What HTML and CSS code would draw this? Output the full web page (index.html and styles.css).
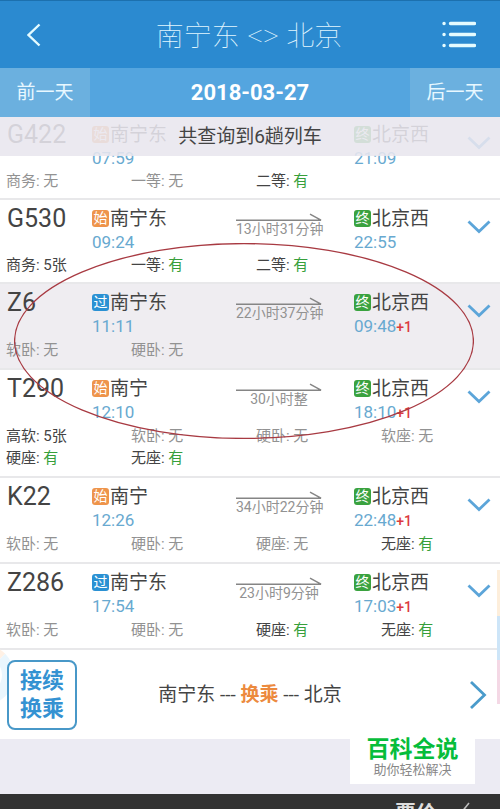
FILE: index.html
```html
<!DOCTYPE html>
<html lang="zh-CN">
<head>
<meta charset="utf-8">
<meta name="viewport" content="width=device-width, initial-scale=1">
<title>南宁东 - 北京</title>
<link rel="stylesheet" href="styles.css">
</head>
<body>
<svg class="defs" aria-hidden="true">
  <symbol id="arrow" viewBox="0 0 86 10"><path d="M0 8.2H85L74 2.2" fill="none" stroke="#858585" stroke-width="1.5"/></symbol>
  <symbol id="down" viewBox="0 0 24 14"><path d="M1.5 1.5L12 11.5L22.5 1.5" fill="none" stroke="#5ca5d9" stroke-width="2.8"/></symbol>
</svg>
<header class="topbar">
  <button class="icon-btn" aria-label="返回"><svg width="14" height="24" viewBox="0 0 14 24"><path d="M12.500 1.500L1.500 12L12.500 22.500" fill="none" stroke="#e4fbff" stroke-width="2.4"/></svg></button>
  <h1>南宁东 &lt;&gt; 北京</h1>
  <button class="icon-btn" aria-label="菜单"><svg width="34" height="27" viewBox="0 0 34 27"><path d="M8.500 2.500H32.500M8.500 13.500H32.500M8.500 24.500H32.500M2 2.500H2.100M2 13.500H2.100M2 24.500H2.100" stroke="#e4fbff" stroke-width="3.400" stroke-linecap="round"/></svg></button>
</header>
<nav class="days">
  <button>前一天</button>
  <strong>2018-03-27</strong>
  <button>后一天</button>
</nav>
<main>
  <p class="summary">共查询到6趟列车</p>
  <ul class="trains">
    <li class="train compact">
      <div class="route">
        <h2>G422</h2>
        <div><p class="station"><i class="tag start">始</i>南宁东</p><time>07:59</time></div>
        <div class="trip"></div>
        <div><p class="station"><i class="tag end">终</i>北京西</p><time>21:09</time></div>
        <button class="more" aria-label="展开"><svg width="24" height="14"><use href="#down"/></svg></button>
      </div>
      <div class="seats"><span class="none">商务: 无</span><span class="none">一等: 无</span><span>二等: <b>有</b></span></div>
    </li>
    <li class="train compact">
      <div class="route">
        <h2>G530</h2>
        <div><p class="station"><i class="tag start">始</i>南宁东</p><time>09:24</time></div>
        <div class="trip"><svg width="86" height="10"><use href="#arrow"/></svg><span>13小时31分钟</span></div>
        <div><p class="station"><i class="tag end">终</i>北京西</p><time>22:55</time></div>
        <button class="more" aria-label="展开"><svg width="24" height="14"><use href="#down"/></svg></button>
      </div>
      <div class="seats"><span>商务: 5张</span><span>一等: <b>有</b></span><span>二等: <b>有</b></span></div>
    </li>
    <li class="train selected">
      <div class="route">
        <h2>Z6</h2>
        <div><p class="station"><i class="tag pass">过</i>南宁东</p><time>11:11</time></div>
        <div class="trip"><svg width="86" height="10"><use href="#arrow"/></svg><span>22小时37分钟</span></div>
        <div><p class="station"><i class="tag end">终</i>北京西</p><time>09:48<em>+1</em></time></div>
        <button class="more" aria-label="展开"><svg width="24" height="14"><use href="#down"/></svg></button>
      </div>
      <div class="seats"><span class="none">软卧: 无</span><span class="none">硬卧: 无</span></div>
    </li>
    <li class="train">
      <div class="route">
        <h2>T290</h2>
        <div><p class="station"><i class="tag start">始</i>南宁</p><time>12:10</time></div>
        <div class="trip"><svg width="86" height="10"><use href="#arrow"/></svg><span>30小时整</span></div>
        <div><p class="station"><i class="tag end">终</i>北京西</p><time>18:10<em>+1</em></time></div>
        <button class="more" aria-label="展开"><svg width="24" height="14"><use href="#down"/></svg></button>
      </div>
      <div class="seats"><span>高软: 5张</span><span class="none">软卧: 无</span><span class="none">硬卧: 无</span><span class="none">软座: 无</span><span>硬座: <b>有</b></span><span>无座: <b>有</b></span></div>
    </li>
    <li class="train">
      <div class="route">
        <h2>K22</h2>
        <div><p class="station"><i class="tag start">始</i>南宁</p><time>12:26</time></div>
        <div class="trip"><svg width="86" height="10"><use href="#arrow"/></svg><span>34小时22分钟</span></div>
        <div><p class="station"><i class="tag end">终</i>北京西</p><time>22:48<em>+1</em></time></div>
        <button class="more" aria-label="展开"><svg width="24" height="14"><use href="#down"/></svg></button>
      </div>
      <div class="seats"><span class="none">软卧: 无</span><span class="none">硬卧: 无</span><span class="none">硬座: 无</span><span>无座: <b>有</b></span></div>
    </li>
    <li class="train">
      <div class="route">
        <h2>Z286</h2>
        <div><p class="station"><i class="tag pass">过</i>南宁东</p><time>17:54</time></div>
        <div class="trip"><svg width="86" height="10"><use href="#arrow"/></svg><span>23小时9分钟</span></div>
        <div><p class="station"><i class="tag end">终</i>北京西</p><time>17:03<em>+1</em></time></div>
        <button class="more" aria-label="展开"><svg width="24" height="14"><use href="#down"/></svg></button>
      </div>
      <div class="seats"><span class="none">软卧: 无</span><span class="none">硬卧: 无</span><span>硬座: <b>有</b></span><span>无座: <b>有</b></span></div>
    </li>
  </ul>
  <section class="transfer">
    <button class="transfer-btn">接续换乘</button>
    <p>南宁东 --- <b>换乘</b> --- 北京</p>
    <svg width="18" height="30" viewBox="0 0 18 30"><path d="M2 2L15.500 15L2 28" fill="none" stroke="#4a9bcb" stroke-width="2.800"/></svg>
  </section>
  <svg class="marker" viewBox="0 0 460 196" preserveAspectRatio="none" aria-hidden="true"><ellipse cx="230" cy="98" rx="229.400" ry="97.400" fill="none" stroke="#a83a42" stroke-width="1.300"/></svg>
  <div class="edge-left"></div>
  <div class="edge-right"></div>
</main>
<aside class="watermark"><strong>百科全说</strong><span>助你轻松解决</span></aside>
<footer class="sortbar"><span>票价</span><svg width="22" height="20" viewBox="0 0 22 20"><path d="M2 9L8 16L20 1" fill="none" stroke="#bbb" stroke-width="1.600"/></svg></footer>
</body>
</html>
```
FILE: styles.css
```css
* { box-sizing: border-box; margin: 0; padding: 0; }
body {
  display: flex;
  flex-direction: column;
  height: 100vh;
  overflow: hidden;
  background: #ecebf3;
  color: #444;
  font-family: Roboto, "Noto Sans CJK SC", sans-serif;
}
button { border: 0; background: none; font: inherit; color: inherit; }
svg { display: block; }
ul { list-style: none; }
i, em { font-style: normal; }
.defs { position: absolute; width: 0; height: 0; }

.topbar {
  display: grid;
  grid-template-columns: 1fr auto 1fr;
  align-items: center;
  flex: none;
  height: 68px;
  padding: 0 24px 0 27px;
  border-top: 1px solid #1c70ae;
  background: #2b8ad0;
  color: #e2f7ff;
}
.topbar h1 {
  margin-right: 5px;
  font-family: "Noto Sans", "Noto Sans CJK SC", sans-serif;
  font-size: 28px;
  font-weight: 100;
  line-height: 40px;
}
.icon-btn:last-child { justify-self: end; }

.days {
  display: grid;
  grid-template-columns: 18% 1fr 18%;
  align-items: center;
  flex: none;
  height: 49px;
  background: #54a5df;
  color: #fff;
  text-align: center;
}
.days button { height: 100%; padding-bottom: 4px; background: #6bb0df; color: #e8f8ff; font-size: 19px; }
.days strong { font-size: 22px; }

main { position: relative; flex: 1; overflow: hidden; }
.summary {
  position: absolute;
  z-index: 1;
  width: 100%;
  background: rgba(232, 230, 238, 0.88);
  color: #444;
  font-size: 19px;
  line-height: 39px;
  text-align: center;
}
.trains { margin-top: -1px; }
.train { padding-top: 6px; border-bottom: 2px solid #e8e8ea; background: #fff; }
.train.selected { background: #efedf1; }
.route {
  display: grid;
  grid-template-columns: 92fr 144fr 118fr 113fr 33fr;
  height: 49px;
}
.route h2 { padding-left: 7px; font-size: 25px; font-weight: 400; line-height: 26px; }
.station { display: flex; align-items: center; gap: 1px; font-size: 19px; line-height: 25px; }
.tag {
  width: 17px;
  height: 17px;
  border-radius: 3px;
  color: #fff;
  font-size: 14px;
  line-height: 17px;
  text-align: center;
}
.start { background: #ee944b; }
.pass { background: #2b91d3; }
.end { background: #3aa23f; }
time { display: block; color: #68a9d0; font-size: 17px; line-height: 23px; }
time em { color: #dc3b40; font-size: 14px; font-weight: 500; }
.trip { width: 86px; padding-top: 6px; color: #929292; font-size: 14px; line-height: 15px; text-align: center; }
.trip span { white-space: nowrap; }
.more { align-self: center; padding-bottom: 7px; }
.seats { display: grid; grid-template-columns: repeat(4, 1fr); padding-bottom: 7px; font-size: 15px; line-height: 22px; }
.compact .seats { line-height: 20px; }
.seats span { padding-left: 6px; }
.seats b { color: #379f3b; font-weight: 400; }
.seats .none { color: #929292; }

.transfer {
  display: grid;
  grid-template-columns: 70px 1fr 18px;
  align-items: center;
  height: 89px;
  padding: 0 13px 0 7px;
  background: #fff;
  font-size: 19px;
}
.transfer p { padding: 0 46px 4px 0; text-align: center; }
.transfer p b { color: #ec8a3e; }
.transfer-btn {
  position: relative;
  z-index: 1;
  height: 70px;
  padding: 0 11px;
  border: 2px solid #4898c8;
  border-radius: 8px;
  background: #fff;
  color: #3492d2;
  font-size: 22px;
  font-weight: 700;
  line-height: 28px;
}
.marker { position: absolute; top: 126px; left: 2.8%; width: 92%; height: 196px; }
.edge-left {
  position: absolute;
  top: 528px;
  left: -46px;
  width: 60px;
  height: 60px;
  border: 12px solid #eaf6fd;
  border-top-color: #fff1e5;
  border-radius: 50%;
}
.edge-right {
  position: absolute;
  top: 453px;
  right: 0;
  width: 3px;
  height: 134px;
  background: linear-gradient(#fdeedb 34%, #cde5f8 34% 67%, #f4d8e5 67%);
}

.watermark {
  position: absolute;
  right: 5%;
  bottom: 25px;
  display: flex;
  flex-direction: column;
  align-items: center;
  width: 125px;
  height: 61px;
  padding-top: 14px;
  background: #fff;
}
.watermark strong { color: #06bd3b; font-size: 23px; font-weight: 700; line-height: 25px; }
.watermark span { color: #888; font-size: 13px; line-height: 16px; }
.sortbar {
  display: flex;
  justify-content: flex-end;
  gap: 12px;
  flex: none;
  height: 15px;
  padding: 8px 29px 0 0;
  overflow: hidden;
  background: #323232;
  color: #ddd;
  font-size: 21px;
  font-weight: 700;
  line-height: 22px;
}
```
